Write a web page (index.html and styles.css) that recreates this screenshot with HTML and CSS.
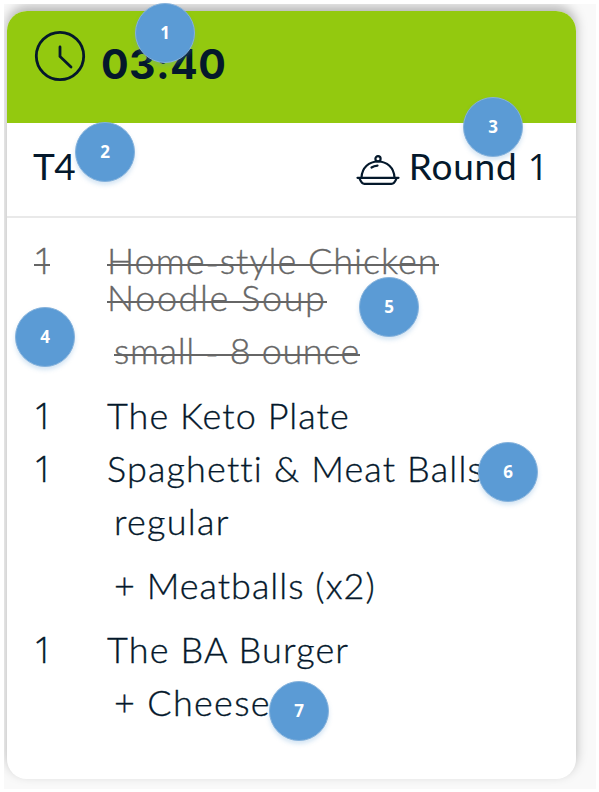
FILE: index.html
```html
<!DOCTYPE html>
<html lang="en">
<head>
  <meta charset="UTF-8">
  <meta name="viewport" content="width=device-width, initial-scale=1.0">
  <title>Kitchen Ticket</title>
  <link rel="stylesheet" href="styles.css">
</head>
<body>
  <div class="board">
    <div class="ticket">
      <div class="ticket-header">
        <svg class="clock" viewBox="0 0 52 52" fill="none" stroke="#04182b" stroke-width="2.8" stroke-linecap="round">
          <circle cx="26" cy="26" r="23.7"/>
          <path d="M26 17v9.5l11 10.5"/>
        </svg>
        <span class="time">03:40</span>
      </div>
      <div class="ticket-info">
        <span class="table">T4</span>
        <span class="round">
          <svg class="cloche" viewBox="0 0 44 32" fill="none" stroke="#04182b" stroke-width="2.2" stroke-linecap="round" stroke-linejoin="round">
            <path d="M5.500 23.500C6 13.500 13 7.500 22 7.500S38 13.500 38.500 23.500"/>
            <circle cx="22" cy="4.800" r="2.600"/>
            <path d="M1.500 23.800h41M3.500 24.300q2 5.500 5 5.500h27q3 0 5-5.500"/>
            <path d="M15.500 13.500q2.500-1.700 6-1.900"/>
          </svg>
          <span class="round-name">Round <span class="digit">1</span></span>
        </span>
      </div>
      <div class="items">
        <div class="item done">
          <span class="qty strike">1</span>
          <div class="detail">
            <div class="name"><span class="strike home">Home<span class="dash">-</span>style Chicken</span><br><span class="strike soup">Noodle Soup</span></div>
            <div class="option"><span class="strike small">small <span class="dash">-</span> 8 ounce</span></div>
          </div>
        </div>
        <div class="item">
          <span class="qty">1</span>
          <div class="detail">
            <div class="name keto">The Keto Plate</div>
          </div>
        </div>
        <div class="item">
          <span class="qty">1</span>
          <div class="detail">
            <div class="name spaghetti">Spaghetti &amp; Meat Balls</div>
            <div class="option regular">regular</div>
            <div class="extra meatballs">+ Meatballs (x2)</div>
          </div>
        </div>
        <div class="item">
          <span class="qty">1</span>
          <div class="detail">
            <div class="name burger">The BA Burger</div>
            <div class="extra cheese">+ Cheese</div>
          </div>
        </div>
      </div>
    </div>
    <!-- numbered callouts -->
    <span class="callout c1">1</span>
    <span class="callout c2">2</span>
    <span class="callout c3">3</span>
    <span class="callout c4">4</span>
    <span class="callout c5">5</span>
    <span class="callout c6">6</span>
    <span class="callout c7">7</span>
  </div>
</body>
</html>
```
FILE: styles.css
```css
* {
  box-sizing: border-box;
}
body {
  margin: 0;
  height: 792px;
  padding: 4px 3px 3px 4px;
  background-color: #fff;
  color: #04182b;
  font-family: Lato, "Open Sans", sans-serif;
  overflow: hidden;
}
.board {
  height: 785px;
  padding: 7px 20px 10px 3px;
  background-color: #f9f9f9;
  overflow: hidden;
}
.ticket {
  width: 569px;
  height: 768px;
  background-color: #fff;
  border-radius: 20px;
  box-shadow: 0 -5px 12px rgba(0, 0, 0, 0.28);
  overflow: hidden;
}
.ticket-header {
  display: flex;
  height: 112px;
  padding: 19px 0 0 27px;
  background-color: #93c90f;
}
.clock {
  width: 52px;
  height: 52px;
}
.time {
  margin: 9px 0 0 15px;
  font-family: Inter, sans-serif;
  font-size: 41px;
  font-weight: 700;
  line-height: 50px;
  letter-spacing: 0.4px;
}
.ticket-info {
  display: flex;
  justify-content: space-between;
  height: 95px;
  padding: 21px 27px 0 26px;
  border-bottom: 2px solid #e9e9e9;
  font-size: 37px;
  line-height: 44px;
}
.table {
  letter-spacing: -0.5px;
}
.round {
  display: flex;
}
.round-name {
  letter-spacing: 0.75px;
}
.digit {
  font-family: "Open Sans", sans-serif;
  font-size: 36px;
  line-height: 1;
}
.cloche {
  width: 44px;
  height: 32px;
  margin: 10px 9px 0 0;
}
.items {
  padding: 24px 27px 0;
  font-size: 36px;
  font-weight: 300;
  line-height: 37px;
  white-space: nowrap;
  -webkit-text-stroke: 0.35px currentColor;
}
.item {
  display: flex;
  margin-bottom: 16px;
}
.done {
  margin-bottom: 28px;
  color: #666;
}
.strike {
  display: inline-block;
  height: 37px;
  background: linear-gradient(#666, #666) 0 22px / 100% 2px no-repeat;
}
.dash {
  line-height: 1;
  vertical-align: -2px;
}
.item:nth-child(3) {
  margin-bottom: 27px;
}
.qty {
  width: 73px;
  font-family: "Open Sans", sans-serif;
  text-indent: -1px;
}
.done .qty {
  width: 16px;
  margin-right: 57px;
}
.home {
  letter-spacing: 1px;
}
.soup {
  letter-spacing: 1.6px;
}
.small {
  letter-spacing: 0.65px;
}
.keto {
  letter-spacing: 1.05px;
}
.spaghetti {
  letter-spacing: 1.15px;
}
.regular {
  letter-spacing: 1.3px;
}
.meatballs {
  letter-spacing: 1px;
}
.burger {
  letter-spacing: 1.15px;
}
.cheese {
  letter-spacing: 1.3px;
}
.option {
  margin: 16px 0 0 7px;
}
.extra {
  margin: 16px 0 0 7px;
}
.option + .extra {
  margin-top: 27px;
}
.callout {
  position: absolute;
  width: 60px;
  height: 60px;
  border: 1px solid #85b2dc;
  border-radius: 50%;
  background-color: #5b9bd5;
  box-shadow: 0 3px 4px rgba(91, 155, 213, 0.25);
  color: #fff;
  font-family: "Open Sans", sans-serif;
  font-size: 17px;
  font-weight: 700;
  line-height: 57px;
  text-align: center;
}
.c1 {
  left: 135px;
  top: 3px;
}
.c2 {
  left: 75px;
  top: 122px;
}
.c3 {
  left: 463px;
  top: 97px;
}
.c4 {
  left: 15px;
  top: 307px;
}
.c5 {
  left: 359px;
  top: 277px;
}
.c6 {
  left: 478px;
  top: 442px;
}
.c7 {
  left: 269px;
  top: 681px;
}
```
